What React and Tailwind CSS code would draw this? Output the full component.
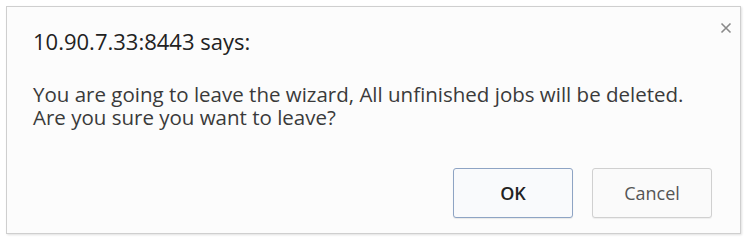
import React from "react";

export default function App() {
  return (
    <div className="w-[748px] h-[240px] bg-white p-[6px] font-['Open_Sans',sans-serif]">
      <div className="relative w-[735px] h-[228px] border border-[#cfcfcf] bg-[#fcfcfc] shadow-[1px_1px_2px_rgba(0,0,0,0.12)] flex flex-col">
        {/* close */}
        <button className="absolute right-[8px] top-[15px] text-[#8a8a8a]" aria-label="Close">
          <svg width="12" height="12" viewBox="0 0 12 12">
            <path d="M1.5 1.5 L10.5 10.5 M10.5 1.5 L1.5 10.5" stroke="currentColor" strokeWidth="1.6" />
          </svg>
        </button>

        <div className="pl-[26px] pt-[19px] text-[22px] leading-[30px] text-[#222]">
          10.90.7.33:8443 says:
        </div>

        <div className="pl-[26px] pt-[27px] text-[20.5px] leading-[23px] text-[#3a3a3a]">
          <p>You are going to leave the wizard, All unfinished jobs will be deleted.</p>
          <p>Are you sure you want to leave?</p>
        </div>

        <div className="mt-auto mb-[15px] mr-[28px] flex justify-end gap-[19px]">
          <button className="w-[120px] h-[50px] rounded-[3px] border border-[#8ea4c4] bg-[#f9fafc] text-[18px] font-semibold text-[#222] shadow-[0_1px_1px_rgba(0,0,0,0.08)]">
            OK
          </button>
          <button className="w-[120px] h-[50px] rounded-[3px] border border-[#d0d0d0] bg-[#fafafa] text-[18px] text-[#555] shadow-[0_1px_1px_rgba(0,0,0,0.06)]">
            Cancel
          </button>
        </div>
      </div>
    </div>
  );
}
